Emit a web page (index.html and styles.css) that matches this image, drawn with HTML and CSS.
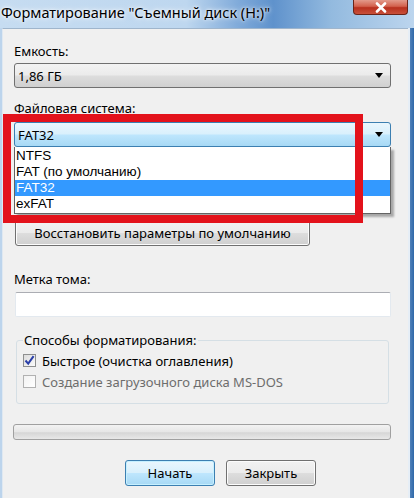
FILE: index.html
```html
<!DOCTYPE html>
<html lang="ru">
<head>
    <meta charset="UTF-8">
    <title>Форматирование</title>
    <link rel="stylesheet" href="styles.css">
</head>
<body>
    <div class="dialog">
        <header class="titlebar">
            <span class="title">Форматирование "Съемный диск (H:)"</span>
            <span class="close">
                <svg width="14" height="11" viewBox="0 0 14 11"><path d="M3 1.5 L11 9.5 M11 1.5 L3 9.5" stroke="#fff" stroke-width="2.6" stroke-linecap="round"/></svg>
            </span>
        </header>
        <div class="frame">
            <main class="client">
                <div class="label first">Емкость:</div>
                <div class="combo">
                    <span>1,86 ГБ</span>
                    <span class="arrow"></span>
                </div>

                <div class="label fs">Файловая система:</div>
                <div class="combo-wrap">
                    <div class="combo focused">
                        <span>FAT32</span>
                        <span class="arrow"></span>
                    </div>
                    <ul class="dropdown">
                        <li>NTFS</li>
                        <li>FAT (по умолчанию)</li>
                        <li class="selected">FAT32</li>
                        <li>exFAT</li>
                    </ul>
                </div>

                <button class="btn restore">Восстановить параметры по умолчанию</button>

                <div class="label volume">Метка тома:</div>
                <div class="textbox"></div>

                <fieldset class="group">
                    <legend>Способы форматирования:</legend>
                    <div class="check-row">
                        <span class="checkbox checked">
                            <svg width="11" height="11" viewBox="0 0 11 11"><path d="M1.5 5.5 L4.2 8.6 L9.6 1.2" fill="none" stroke="#2a3fa8" stroke-width="2"/></svg>
                        </span>
                        <span>Быстрое (очистка оглавления)</span>
                    </div>
                    <div class="check-row disabled">
                        <span class="checkbox"></span>
                        <span>Создание загрузочного диска MS-DOS</span>
                    </div>
                </fieldset>

                <div class="progress"></div>

                <div class="actions">
                    <button class="btn default">Начать</button>
                    <button class="btn">Закрыть</button>
                </div>
            </main>
            <div class="edge"></div>
        </div>
        <div class="highlight"></div>
    </div>
</body>
</html>
```

FILE: styles.css
```css
body {
    margin: 0;
    padding: 0;
    background: #f0f0f0;
    font-family: "Noto Sans", "Liberation Sans", sans-serif;
    font-size: 13px;
    color: #000;
}

.dialog {
    position: relative;
    width: 414px;
    height: 498px;
    overflow: hidden;
    background: #bcd4ec;
}

.titlebar {
    height: 28px;
    display: flex;
    justify-content: space-between;
    align-items: flex-start;
    background: linear-gradient(90deg, #c6dcf1 0%, #bed7ef 45%, #7ea9d9 58%, #5f92cc 66%, #93badf 80%, #bcd5ee 100%);
}

.title {
    padding: 3px 0 0 1px;
    font-size: 14.5px;
    line-height: 18px;
    color: #000;
    text-shadow: 0 0 6px #fff, 0 0 3px #fff;
}

.close {
    width: 55px;
    height: 15px;
    margin-right: 6px;
    display: flex;
    justify-content: center;
    align-items: center;
    background: linear-gradient(#e39a8b 0%, #d3614d 45%, #b8301e 55%, #c8503a 100%);
    border: 1px solid #6b2418;
    border-top: none;
    border-radius: 0 0 4px 4px;
    box-sizing: border-box;
}

.frame {
    display: flex;
    height: 470px;
    padding-left: 2px;
}

.client {
    flex: 1;
    background: #f0f0f0;
    border-top: 1px solid #9fb5cc;
    border-left: 1px solid #dfe8f1;
    padding: 14px 17px 0 11px;
}

.edge {
    width: 6px;
    background: linear-gradient(90deg, #e6eef6 0%, #e6eef6 30%, #4d7fb8 40%, #2f68a8 100%);
}

.label {
    line-height: 16px;
    height: 16px;
}

.label.first {
    margin-bottom: 4px;
}

.label.fs {
    margin-top: 12px;
    margin-bottom: 6px;
}

.label.volume {
    margin-top: 25px;
    margin-bottom: 5px;
}

.combo {
    height: 25px;
    box-sizing: border-box;
    display: flex;
    justify-content: space-between;
    align-items: center;
    padding: 0 7px 0 3px;
    border: 1px solid #707070;
    border-radius: 3px;
    background: linear-gradient(#f3f3f3 0%, #ebebeb 48%, #dddddd 52%, #d0d0d0 100%);
}

.combo.focused {
    border-color: #3c7fb1;
    background: linear-gradient(#eaf6fd 0%, #d9f0fc 48%, #bee6fd 52%, #a7d9f5 100%);
}

.arrow {
    width: 0;
    height: 0;
    border-left: 4px solid transparent;
    border-right: 4px solid transparent;
    border-top: 5px solid #000;
}

.combo-wrap {
    position: relative;
}

.dropdown {
    position: absolute;
    top: 100%;
    left: 0;
    right: 0;
    margin: 0;
    padding: 1px 0;
    list-style: none;
    background: #fff;
    border: 1px solid #646464;
    border-top: none;
    box-shadow: 3px 3px 2px rgba(0, 0, 0, 0.3);
    z-index: 2;
}

.dropdown li {
    height: 16px;
    line-height: 16px;
    padding-left: 1px;
    font-family: "Liberation Sans", sans-serif;
    font-size: 13.5px;
}

.dropdown li.selected {
    background: #3399ff;
    color: #fff;
}

.btn {
    font-family: inherit;
    font-size: 13px;
    height: 26px;
    width: 90px;
    padding: 0;
    color: #000;
    border: 1px solid #707070;
    border-radius: 3px;
    background: linear-gradient(#f2f2f2 0%, #ebebeb 48%, #dddddd 52%, #cfcfcf 100%);
    box-shadow: inset 0 0 0 1px #fcfcfc;
}

.btn.restore {
    display: block;
    width: 295px;
    margin: 73px 0 0 1px;
}

.btn.default {
    border-color: #3c7fb1;
    background: linear-gradient(#eaf6fd 0%, #d9f0fc 48%, #bee6fd 52%, #a7d9f5 100%);
    box-shadow: inset 0 0 0 1px #c6f0ff;
}

.textbox {
    height: 25px;
    box-sizing: border-box;
    margin-left: 1px;
    background: #fff;
    border: 1px solid #e3e9ef;
    border-top-color: #abadb3;
    border-radius: 2px;
}

.group {
    margin: 15px 2px 0 2px;
    padding: 2px 6px 8px 6px;
    border: 1px solid #d5dfe5;
    border-radius: 3px;
    height: 60px;
}

.group legend {
    padding: 0 1px;
    line-height: 16px;
}

.check-row {
    display: flex;
    align-items: center;
    gap: 6px;
    height: 21px;
}

.check-row.disabled {
    color: #6d6d6d;
}

.checkbox {
    width: 13px;
    height: 13px;
    box-sizing: border-box;
    display: flex;
    justify-content: center;
    align-items: center;
    border: 1px solid #b1b1b1;
    background: linear-gradient(135deg, #f2f2f2, #ffffff);
}

.checkbox.checked {
    border-color: #8e8f8f;
    background: linear-gradient(135deg, #dcdcdc, #fbfbfb);
}

.progress {
    height: 16px;
    box-sizing: border-box;
    margin: 20px 0 0 -1px;
    border: 1px solid #a0a0a0;
    border-radius: 3px;
    background: linear-gradient(#f3f3f3 0%, #e6e6e6 50%, #d6d6d6 55%, #e8e8e8 100%);
}

.actions {
    display: flex;
    gap: 11px;
    margin-top: 20px;
    padding-left: 111px;
}

.highlight {
    position: absolute;
    left: 3px;
    top: 114px;
    width: 360px;
    height: 109px;
    box-sizing: border-box;
    border: 8px solid #e3121b;
    z-index: 5;
}
```
